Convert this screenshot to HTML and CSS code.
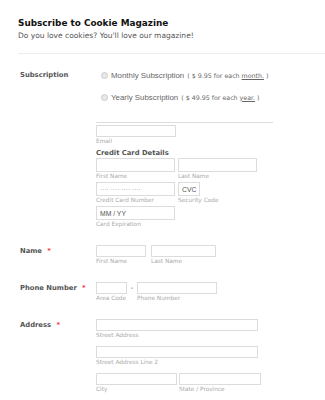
FILE: index.html
```html
<!doctype html>
<html>
    <head>
        <meta charset="utf-8">
        <link rel="stylesheet" href="styles.css">
    </head>
    <body>

        <div class="header">
            <h1>Subscribe to Cookie Magazine</h1>
            <p>Do you love cookies? You'll love our magazine!</p>
        </div>
        <div class="divider"></div>

        <ul class="form">
            <li class="row row-pay">
                <label class="row-label">Subscription</label>
                <div class="row-input">
                    <div class="opt">
                        <span class="radio"></span>
                        <span class="opt-name">Monthly Subscription</span>
                        <span class="opt-price">( $ 9.95 for each <u>month.</u> )</span>
                    </div>
                    <div class="opt">
                        <span class="radio"></span>
                        <span class="opt-name">Yearly Subscription</span>
                        <span class="opt-price">( $ 49.95 for each <u>year.</u> )</span>
                    </div>

                    <div class="card">
                        <div class="field"><span class="box w-80"></span><span class="sub">Email</span></div>
                        <div class="card-title">Credit Card Details</div>
                        <div class="pair">
                            <div class="field"><span class="box tall w-79"></span><span class="sub">First Name</span></div>
                            <div class="field"><span class="box tall w-79"></span><span class="sub">Last Name</span></div>
                        </div>
                        <div class="pair">
                            <div class="field"><span class="box tall w-79"><span class="ph dots">&middot;&middot;&middot;&middot; &middot;&middot;&middot;&middot; &middot;&middot;&middot;&middot; &middot;&middot;&middot;&middot;</span></span><span class="sub">Credit Card Number</span></div>
                            <div class="field"><span class="box tall w-22"><span class="ph">CVC</span></span><span class="sub">Security Code</span></div>
                        </div>
                        <div class="pair">
                            <div class="field"><span class="box tall w-79"><span class="ph">MM / YY</span></span><span class="sub">Card Expiration</span></div>
                        </div>
                    </div>
                </div>
            </li>

            <li class="row">
                <label class="row-label">Name <span class="req">*</span></label>
                <div class="pair gap-5">
                    <div class="field"><span class="box w-50"></span><span class="sub">First Name</span></div>
                    <div class="field"><span class="box w-65"></span><span class="sub">Last Name</span></div>
                </div>
            </li>

            <li class="row">
                <label class="row-label">Phone Number <span class="req">*</span></label>
                <div class="pair gap-0">
                    <div class="field"><span class="box w-31"></span><span class="sub">Area Code</span></div>
                    <span class="dash">-</span>
                    <div class="field"><span class="box w-80"></span><span class="sub">Phone Number</span></div>
                </div>
            </li>

            <li class="row">
                <label class="row-label">Address <span class="req">*</span></label>
                <div class="stack">
                    <div class="field"><span class="box w-162"></span><span class="sub">Street Address</span></div>
                    <div class="field"><span class="box w-162"></span><span class="sub">Street Address Line 2</span></div>
                    <div class="pair gap-2">
                        <div class="field"><span class="box w-81"></span><span class="sub">City</span></div>
                        <div class="field"><span class="box w-82"></span><span class="sub">State / Province</span></div>
                    </div>
                    <div class="pair gap-2">
                        <div class="field"><span class="box w-81"></span></div>
                        <div class="field"><span class="box w-82 select"></span></div>
                    </div>
                </div>
            </li>
        </ul>

    </body>
</html>
```

FILE: styles.css
```css
body {
    margin:0;
    background:#fff;
    font-family:"DejaVu Sans", Verdana, sans-serif;
    color:#555;
}

.header {
    padding:17px 18px 0;
}

.header h1 {
    margin:0;
    font-size:8.9px;
    line-height:12px;
    font-weight:bold;
    color:#111;
}

.header p {
    margin:2px 0 0;
    font-size:7.5px;
    line-height:10px;
    color:#555;
}

.divider {
    margin:12px 0 0 18px;
    border-top:1px solid #eee;
}

.form {
    list-style:none;
    margin:0;
    padding:0;
}

.row {
    display:grid;
    grid-template-columns:76px 1fr;
    align-items:start;
    padding:16px 0 0 20px;
}

.row-pay {
    padding-top:10px;
}

.row-label {
    font-size:6.8px;
    line-height:12px;
    font-weight:bold;
    color:#555;
}

.row-pay .row-label {
    line-height:22px;
}

.req {
    color:#f23a3c;
    margin-left:3px;
}

/* radio options */
.opt {
    height:22px;
    display:flex;
    align-items:center;
    padding-left:5px;
    font-family:"Liberation Sans", Arial, sans-serif;
}

.radio {
    width:5px;
    height:5px;
    border:1px solid #ccc;
    border-radius:50%;
    background:#e8e8e8;
    margin-right:3px;
}

.opt-name {
    font-size:7.9px;
    color:#666;
}

.opt-price {
    font-family:"DejaVu Sans", Verdana, sans-serif;
    font-size:6.3px;
    color:#666;
    margin-left:3px;
}

/* card block */
.card {
    width:177px;
    margin-top:14px;
    border-top:1px solid #ddd;
    padding-top:2px;
}

.card-title {
    margin-top:3px;
    font-size:6.8px;
    line-height:9px;
    font-weight:bold;
    color:#555;
}

.field {
    display:flex;
    flex-direction:column;
}

.pair {
    display:flex;
    gap:3px;
}

.gap-5 { gap:5px; }
.gap-2 { gap:2px; }
.gap-0 { gap:0; }

.stack {
    display:flex;
    flex-direction:column;
    gap:6px;
}

.card .pair + .pair {
    margin-top:1px;
}

.box {
    box-sizing:border-box;
    height:12px;
    border:1px solid #dcdcdc;
    background:#fff;
    display:flex;
    align-items:center;
    padding-left:3px;
}

.box.tall { height:14px; }
.box.select { border-color:#bbb; }

.w-22 { width:22px; }
.w-31 { width:31px; }
.w-50 { width:50px; }
.w-65 { width:65px; }
.w-79 { width:79px; }
.w-80 { width:80px; }
.w-81 { width:81px; }
.w-82 { width:82px; }
.w-162 { width:162px; }

.ph {
    font-family:"Liberation Sans", Arial, sans-serif;
    font-size:6.8px;
    color:#555;
}

.ph.dots {
    font-size:6px;
    letter-spacing:0.2px;
}

.sub {
    font-size:5.8px;
    line-height:9px;
    color:#aaa;
    white-space:nowrap;
}

.dash {
    width:10px;
    text-align:center;
    font-size:7px;
    line-height:12px;
    color:#555;
}
```
